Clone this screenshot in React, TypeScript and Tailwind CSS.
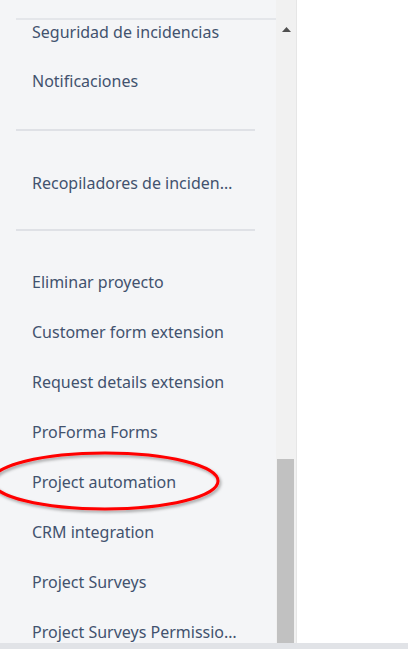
import React from "react";

const items = [
  "Customer form extension",
  "Request details extension",
  "ProForma Forms",
  "Project automation",
  "CRM integration",
  "Project Surveys",
  "Project Surveys Permissions",
];

function Item({ label, className = "" }: { label: string; className?: string }) {
  return (
    <div className={`flex h-[50px] shrink-0 items-center pl-8 ${className}`}>
      <span className="block w-[208px] truncate text-[16px] leading-5 text-[#42526e]">{label}</span>
    </div>
  );
}

export default function App() {
  return (
    <div
      className="relative flex h-[649px] w-[408px] flex-col overflow-hidden bg-white"
      style={{ fontFamily: '"Noto Sans", "Open Sans", sans-serif' }}
    >
      <div className="flex min-h-0 flex-1">
        <div className="flex w-[276px] flex-col overflow-hidden bg-[#f4f5f7]">
          <div className="h-[18px] shrink-0" />
          <div className="ml-4 h-[2px] shrink-0 bg-[#e4e6ea]" />
          <div className="flex h-[36px] shrink-0 items-start pl-8 pt-[2px]">
            <span className="block w-[208px] truncate text-[16px] leading-5 text-[#42526e]">Seguridad de incidencias</span>
          </div>
          <Item label="Notificaciones" />
          <div className="ml-4 mt-[23px] h-[2px] w-[239px] shrink-0 bg-[#dfe1e6]" />
          <Item label="Recopiladores de incidencias" className="mt-[27px]" />
          <div className="ml-4 mt-[21px] h-[2px] w-[239px] shrink-0 bg-[#dfe1e6]" />
          <Item label="Eliminar proyecto" className="mt-[26px]" />
          {items.map((l) => (
            <Item key={l} label={l} />
          ))}
        </div>
        <div className="relative w-[20px] bg-[#f1f1f1]">
          <div className="flex justify-center pt-[27px]">
            <svg width="9" height="5" viewBox="0 0 9 5">
              <polygon points="4.5,0 9,5 0,5" fill="#505050" />
            </svg>
          </div>
          <div className="absolute left-[1px] top-[459px] h-[184px] w-[17px] bg-[#c1c1c1]" />
        </div>
        <div className="w-px bg-[#e6e6e6]" />
        <div className="flex-1 bg-white" />
      </div>
      <div className="h-[6px] bg-[#e1e3e7]" />
      <svg
        className="pointer-events-none absolute left-0 top-0"
        width="408"
        height="649"
        viewBox="0 0 408 649"
      >
        <defs>
          <filter id="sh" x="-20%" y="-50%" width="140%" height="200%">
            <feDropShadow dx="1.5" dy="2" stdDeviation="1.5" floodColor="#000" floodOpacity="0.35" />
          </filter>
        </defs>
        <ellipse cx="105" cy="481" rx="113" ry="28" fill="none" stroke="#ff0000" strokeWidth="3" filter="url(#sh)" />
      </svg>
    </div>
  );
}
